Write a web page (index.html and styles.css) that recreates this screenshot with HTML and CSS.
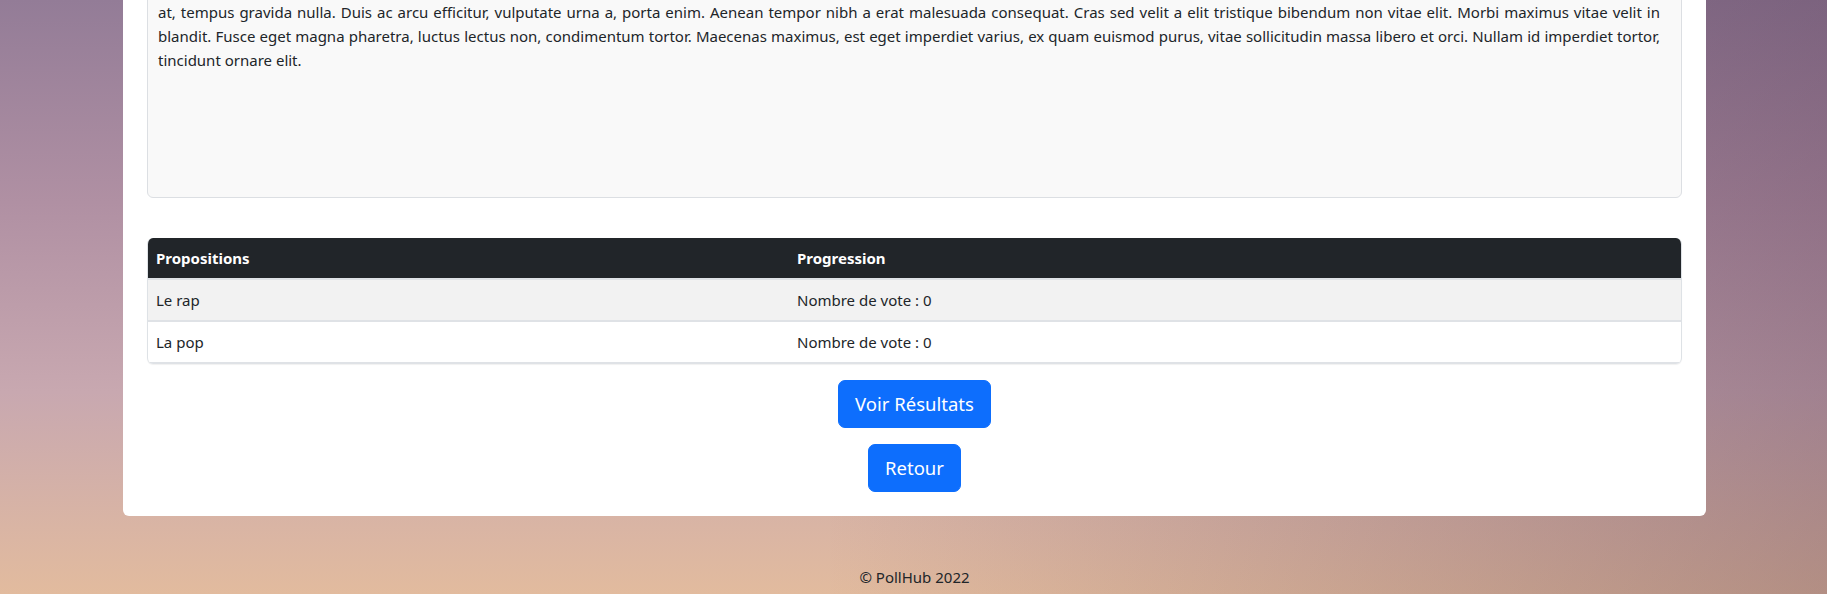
FILE: index.html
```html
<!DOCTYPE html>
<html lang="fr">
<head>
<meta charset="utf-8">
<title>PollHub</title>
<link rel="stylesheet" href="styles.css">
</head>
<body>
<main class="page">
  <section class="card">
    <div class="description">
      <span class="line just">at, tempus gravida nulla. Duis ac arcu efficitur, vulputate urna a, porta enim. Aenean tempor nibh a erat malesuada consequat. Cras sed velit a elit tristique bibendum non vitae elit. Morbi maximus vitae velit in</span>
      <span class="line just">blandit. Fusce eget magna pharetra, luctus lectus non, condimentum tortor. Maecenas maximus, est eget imperdiet varius, ex quam euismod purus, vitae sollicitudin massa libero et orci. Nullam id imperdiet tortor,</span>
      <span class="line">tincidunt ornare elit.</span>
    </div>

    <div class="table-wrap">
      <table class="results">
        <thead>
          <tr><th class="col-prop">Propositions</th><th>Progression</th></tr>
        </thead>
        <tbody>
          <tr class="striped"><td>Le rap</td><td>Nombre de vote : 0</td></tr>
          <tr><td>La pop</td><td>Nombre de vote : 0</td></tr>
        </tbody>
      </table>
    </div>

    <div class="actions">
      <button class="btn" type="button">Voir Résultats</button>
      <button class="btn" type="button">Retour</button>
    </div>
  </section>

  <footer class="footer">© PollHub 2022</footer>
</main>
</body>
</html>
```

FILE: styles.css
```css
html, body {
  margin: 0;
  padding: 0;
}

body {
  height: 594px;
  overflow: hidden;
  font-family: "Noto Sans", "Open Sans", sans-serif;
  font-size: 15px;
  line-height: 24px;
  color: #212529;
  background:
    linear-gradient(to right, rgba(70, 40, 70, 0) 45%, rgba(70, 40, 70, 0.3) 100%),
    linear-gradient(to bottom, #937c97 0%, #b090a3 34%, #c8a8b0 66%, #e2bb9e 100%);
}

.page {
  display: flex;
  flex-direction: column;
  align-items: center;
  padding-left: 2px;
}

.card {
  box-sizing: border-box;
  width: 1583px;
  margin-top: -31px;
  padding: 24px 24px 24px 24px;
  background: #ffffff;
  border-radius: 0 0 6px 6px;
  display: flex;
  flex-direction: column;
}

.description {
  box-sizing: border-box;
  height: 205px;
  padding: 6px 21px 6px 10px;
  background: #f9f9f9;
  border: 1px solid #dcdfe3;
  border-radius: 6px;
}

.line {
  display: block;
  white-space: nowrap;
}

.line.just {
  text-align: justify;
  text-align-last: justify;
  white-space: normal;
}

.table-wrap {
  margin-top: 40px;
  border-left: 1px solid #dee2e6;
  border-right: 1px solid #dee2e6;
  border-radius: 6px;
  overflow: hidden;
  box-shadow: 0 1px 1px rgba(0, 0, 0, 0.06);
}

.results {
  width: 100%;
  border-collapse: collapse;
}

.results th,
.results td {
  height: 40px;
  box-sizing: border-box;
  padding: 8px 8px;
  text-align: left;
  vertical-align: middle;
}

.results thead th {
  background: #212529;
  color: #ffffff;
  font-weight: 700;
  border-bottom: 2px solid #dee2e6;
}

.results .col-prop {
  width: 641px;
}

.results tbody td {
  border-bottom: 2px solid #dfe2e6;
  color: #212529;
}

.results tr.striped td {
  background: #f2f2f2;
}

.actions {
  margin-top: 16px;
  display: flex;
  flex-direction: column;
  align-items: center;
  gap: 16px;
}

.btn {
  box-sizing: border-box;
  height: 48px;
  padding: 0 16px;
  border: 1px solid #0d6efd;
  border-radius: 7px;
  background: #0d6efd;
  color: #ffffff;
  font-family: "Noto Sans", "Open Sans", sans-serif;
  font-size: 18.5px;
  line-height: 28px;
  cursor: pointer;
}

.footer {
  margin-top: 49px;
  text-align: center;
  font-size: 15px;
  line-height: 24px;
  color: #212529;
}
```
